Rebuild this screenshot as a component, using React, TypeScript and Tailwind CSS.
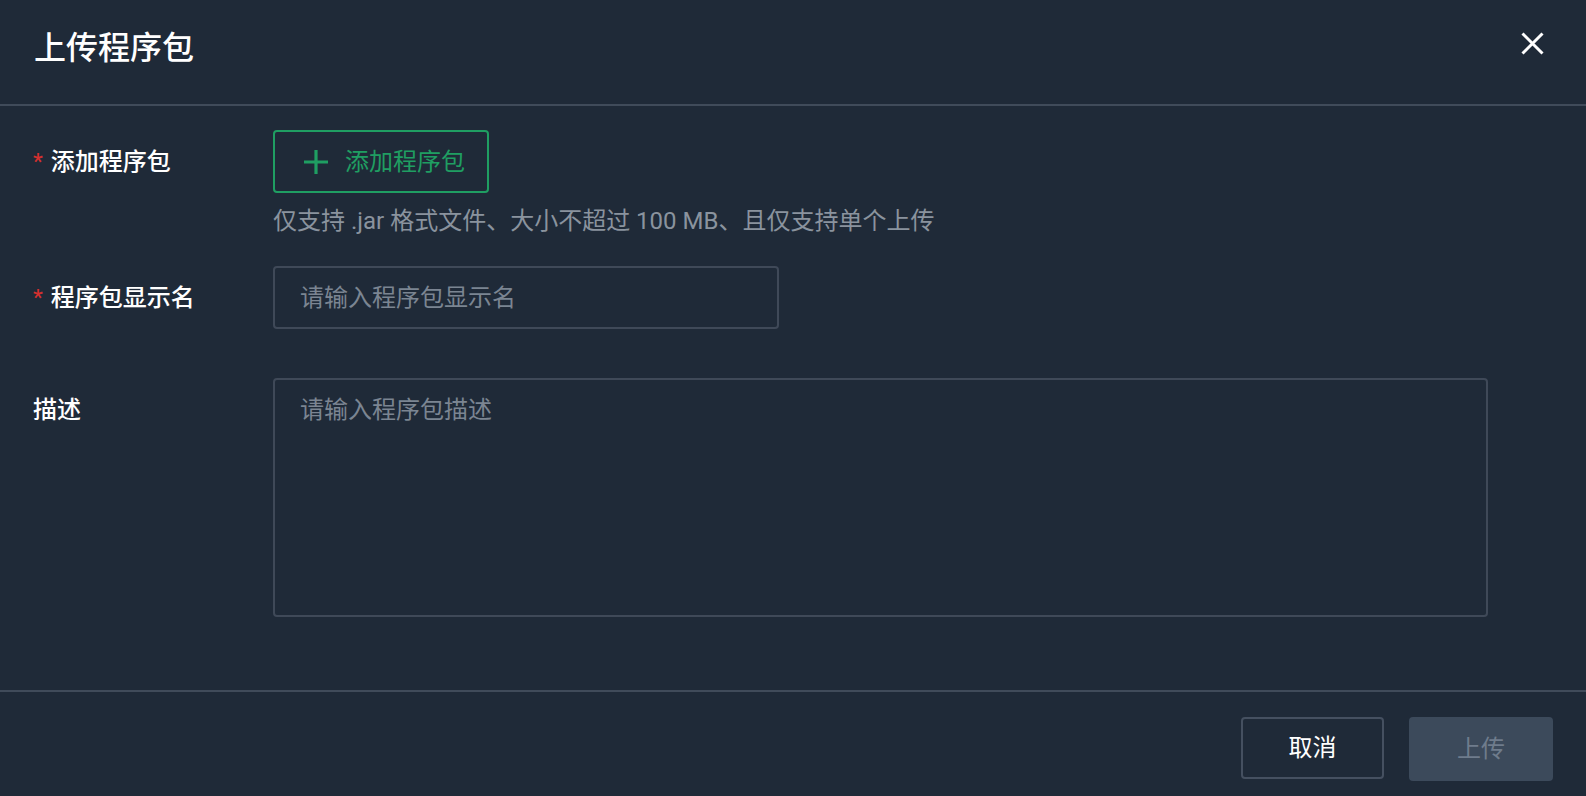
import React from "react";

const font = { fontFamily: "Roboto, 'Noto Sans CJK SC', 'Noto Sans', sans-serif" };

export default function App() {
  return (
    <div
      className="flex h-[796px] w-full flex-col bg-[#1f2a38] text-white"
      style={font}
    >
      {/* Header */}
      <div className="flex h-[106px] shrink-0 items-start justify-between border-b-2 border-[#404b5a] pl-[34px] pr-[42px]">
        <h1 className="pt-[28px] text-[32px] font-medium leading-[40px] text-white">上传程序包</h1>
        <button className="mt-[32px] flex h-[23px] w-[23px] items-center justify-center text-white">
          <svg width="23" height="23" viewBox="0 0 23 23" fill="none">
            <path d="M1.5 1.5L21.5 21.5M21.5 1.5L1.5 21.5" stroke="white" strokeWidth="3" />
          </svg>
        </button>
      </div>

      {/* Body */}
      <div className="flex-1 pl-[33px] pt-[24px]">
        <div className="grid grid-cols-[240px_1fr]">
          {/* Row 1 */}
          <div className="flex h-[63px] items-center text-[24px] font-medium">
            <span className="mr-[8px] text-[22px] text-[#d3302f]">*</span>
            <span>添加程序包</span>
          </div>
          <div>
            <button className="flex h-[63px] w-[216px] items-center rounded-[4px] border-2 border-[#1f9e62] pl-[29px] text-[24px] text-[#1f9e62]">
              <svg width="24" height="24" viewBox="0 0 24 24" fill="none" className="mr-[17px]">
                <path d="M12 0V24M0 12H24" stroke="#1f9e62" strokeWidth="3.2" />
              </svg>
              <span>添加程序包</span>
            </button>
            <div className="mt-[12px] text-[24px] leading-[32px] text-[#8a939e]">
              仅支持 .jar 格式文件、大小不超过 100 MB、且仅支持单个上传
            </div>
          </div>

          {/* Row 2 */}
          <div className="mt-[29px] flex h-[63px] items-center text-[24px] font-medium">
            <span className="mr-[8px] text-[22px] text-[#d3302f]">*</span>
            <span>程序包显示名</span>
          </div>
          <div className="mt-[29px]">
            <input
              className="h-[63px] w-[506px] rounded-[4px] border-2 border-[#3f4958] bg-transparent px-[25px] text-[24px] text-white outline-none placeholder:text-[#7b8592]"
              placeholder="请输入程序包显示名"
            />
          </div>

          {/* Row 3 */}
          <div className="mt-[49px] pt-[14px] text-[24px] font-medium leading-[36px]">描述</div>
          <div className="mt-[49px]">
            <textarea
              className="block h-[239px] w-[1215px] resize-none rounded-[4px] border-2 border-[#3f4958] bg-transparent px-[25px] pt-[12px] text-[24px] leading-[36px] text-white outline-none placeholder:text-[#7b8592]"
              placeholder="请输入程序包描述"
            />
          </div>
        </div>
      </div>

      {/* Footer */}
      <div className="flex h-[106px] shrink-0 items-start justify-end gap-[25px] border-t-2 border-[#404b5a] pr-[33px] pt-[25px]">
        <button className="flex h-[62px] w-[143px] items-center justify-center rounded-[4px] border-2 border-[#455060] text-[24px] text-white">
          取消
        </button>
        <button className="flex h-[64px] w-[144px] items-center justify-center rounded-[4px] bg-[#3c4a5b] text-[24px] text-[#6f7c8c]">
          上传
        </button>
      </div>
    </div>
  );
}
